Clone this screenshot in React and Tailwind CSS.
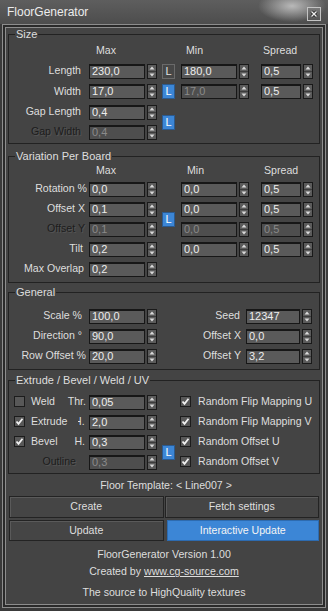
import React from "react";

function Arrows() {
  return (
    <svg width="10" height="15" viewBox="0 0 10 15" className="ml-[2px] shrink-0">
      <rect x="0.5" y="0.5" width="9" height="14" fill="#5b5b5b" stroke="#1a1a1a" />
      <line x1="1" y1="7.5" x2="9" y2="7.5" stroke="#3c3c3c" />
      <path d="M5 2.5 L7.5 5.5 H2.5Z" fill="#dadada" />
      <path d="M5 12.5 L7.5 9.5 H2.5Z" fill="#dadada" />
    </svg>
  );
}

function Spin({ v, w = "w-[56px]", dis, className = "" }) {
  return (
    <div className={`flex items-center h-[15px] ${className}`}>
      <div
        className={`${w} h-[15px] border border-[#171717] border-t-2 pl-[2px] text-[11px] leading-[11px] ${
          dis ? "bg-[#4e4e4e] text-[#8a8a8a]" : "bg-[#5a5a5a] text-[#ededed]"
        }`}
      >
        {v}
      </div>
      <Arrows />
    </div>
  );
}

function LBtn({ blue, className = "" }) {
  return (
    <div
      className={`w-[13px] h-[15px] justify-self-end self-center flex items-center justify-center text-[11px] border ${
        blue ? "bg-[#3c86d6] border-[#2a5a90] text-white" : "bg-[#474747] border-[#6a6a6a] text-[#e0e0e0]"
      } ${className}`}
    >
      L
    </div>
  );
}

function Check({ on }) {
  return (
    <svg width="11" height="11" viewBox="0 0 11 11" className="shrink-0">
      <rect x="0.5" y="0.5" width="10" height="10" fill="#585858" stroke="#1c1c1c" />
      {on && <path d="M2.5 5.5 L4.5 7.8 L8.5 2.8" fill="none" stroke="#f2f2f2" strokeWidth="1.8" />}
    </svg>
  );
}

const dimText = "text-[#1c1c1c] [text-shadow:1px_1px_0_#555555]";

function Lab({ children, pr = "pr-[8px]", dis }) {
  return <div className={`text-right ${pr} ${dis ? dimText : ""}`}>{children}</div>;
}

function Group({ title, children, className = "" }) {
  return (
    <fieldset className={`border border-[#222222] ${className}`}>
      <legend className="ml-[6px] px-[1px] text-[11px] leading-[13px]">{title}</legend>
      {children}
    </fieldset>
  );
}

function Btn({ children, blue }) {
  return (
    <div
      className={`flex items-center justify-center border ${
        blue
          ? "bg-[#3c86d6] border-[#2d6bb0] text-[#f4f4f4]"
          : "bg-[#454545] border-[#232323] shadow-[inset_1px_1px_0_#5a5a5a] text-[#dedede]"
      }`}
    >
      {children}
    </div>
  );
}

export default function App() {
  return (
    <div className="w-[328px] h-[611px] overflow-hidden bg-[#3a3a3a] flex flex-col font-['Liberation_Sans',Arial,sans-serif] text-[10.6px] text-[#dedede]">
      {/* title bar */}
      <div className="h-[24px] shrink-0 flex items-center justify-between pl-[7px] pr-[7px] bg-[radial-gradient(ellipse_34px_16px_at_292px_6px,#b9b9b9,transparent),linear-gradient(#5e5e5e,#4d4d4d)]">
        <span className="text-[12px] text-[#ececec]">FloorGenerator</span>
        <div className="w-[14px] h-[14px] mt-[3px] border border-[#c4c4c4] bg-[linear-gradient(#7a7a7a,#555)] flex items-center justify-center">
          <svg width="8" height="8" viewBox="0 0 8 8">
            <path d="M1.5 1.5 L6.5 6.5 M6.5 1.5 L1.5 6.5" stroke="#202020" strokeWidth="3" />
            <path d="M1.5 1.5 L6.5 6.5 M6.5 1.5 L1.5 6.5" stroke="#f0f0f0" strokeWidth="1.4" />
          </svg>
        </div>
      </div>

      {/* frame */}
      <div className="flex-1 mx-[2px] mb-[3px] border border-[#8d8d8d] p-[2px] bg-[#2a2a2a] flex flex-col">
        <div className="flex-1 border border-[#8d8d8d] bg-[#444444] px-[2px] flex flex-col">
          {/* Size */}
          <Group title="Size">
            <div className="grid grid-cols-[80px_68px_18px_86px_52px] grid-rows-[20px_20px_21px_20px_20px] items-center pb-[1px]">
              <div />
              <div className="pl-[7px]">Max</div>
              <div />
              <div className="pl-[11px]">Min</div>
              <div className="pl-[2px]">Spread</div>

              <Lab>Length</Lab>
              <Spin v="230,0" />
              <LBtn />
              <Spin v="180,0" className="ml-[6px]" />
              <Spin v="0,5" w="w-[41px]" />

              <Lab>Width</Lab>
              <Spin v="17,0" />
              <LBtn blue />
              <Spin v="17,0" dis className="ml-[6px]" />
              <Spin v="0,5" w="w-[41px]" />

              <Lab>Gap Length</Lab>
              <Spin v="0,4" />
              <LBtn blue className="row-span-2" />
              <div />
              <div />

              <Lab dis>Gap Width</Lab>
              <Spin v="0,4" dis />
            </div>
          </Group>

          {/* Variation */}
          <Group title="Variation Per Board" className="mt-[6px]">
            <div className="grid grid-cols-[80px_68px_18px_86px_52px] grid-rows-[16px_20px_20px_20px_20px_20px] items-center pb-[3px]">
              <div />
              <div className="pl-[7px]">Max</div>
              <div />
              <div className="pl-[12px]">Min</div>
              <div className="pl-[3px]">Spread</div>

              <Lab pr="pr-[2px]">Rotation %</Lab>
              <Spin v="0,0" />
              <div />
              <Spin v="0,0" className="ml-[6px]" />
              <Spin v="0,5" w="w-[41px]" />

              <Lab pr="pr-[4px]">Offset X</Lab>
              <Spin v="0,1" />
              <LBtn blue className="row-span-2" />
              <Spin v="0,0" className="ml-[6px]" />
              <Spin v="0,5" w="w-[41px]" />

              <Lab pr="pr-[4px]" dis>Offset Y</Lab>
              <Spin v="0,1" dis />
              <Spin v="0,0" dis className="ml-[6px]" />
              <Spin v="0,5" dis w="w-[41px]" />

              <Lab pr="pr-[6px]">Tilt</Lab>
              <Spin v="0,2" />
              <div />
              <Spin v="0,0" className="ml-[6px]" />
              <Spin v="0,5" w="w-[41px]" />

              <Lab pr="pr-[5px]">Max Overlap</Lab>
              <Spin v="0,2" />
            </div>
          </Group>

          {/* General */}
          <Group title="General" className="mt-[3px]">
            <div className="grid grid-cols-[80px_68px_89px_66px] grid-rows-[20px_20px_20px] items-center pt-[7px] pb-[3px]">
              <Lab pr="pr-[7px]">Scale %</Lab>
              <Spin v="100,0" />
              <Lab pr="pr-[6px]">Seed</Lab>
              <Spin v="12347" w="w-[55px]" />

              <Lab pr="pr-[7px]">Direction °</Lab>
              <Spin v="90,0" />
              <Lab pr="pr-[5px]">Offset X</Lab>
              <Spin v="0,0" w="w-[55px]" />

              <Lab pr="pr-[3px]">Row Offset %</Lab>
              <Spin v="20,0" />
              <Lab pr="pr-[5px]">Offset Y</Lab>
              <Spin v="3,2" w="w-[55px]" />
            </div>
          </Group>

          {/* Extrude */}
          <Group title="Extrude / Bevel / Weld / UV" className="mt-[4px]">
            <div className="grid grid-cols-[80px_68px_18px_1fr] grid-rows-[20px_20px_20px_20px] items-center pt-[5px] pb-[1px]">
              <div className="flex items-center pl-[5px] pr-[3px]">
                <Check />
                <span className="ml-[6px]">Weld</span>
                <span className="ml-auto">Thr.</span>
              </div>
              <Spin v="0,05" />
              <div />
              <div className="flex items-center pl-[5px]">
                <Check on />
                <span className="ml-[7px]">Random Flip Mapping U</span>
              </div>

              <div className="flex items-center pl-[5px]">
                <Check on />
                <span className="ml-[6px] relative z-[1] bg-[#444444] w-[47px] shrink-0">Extrude</span>
                <span className="-ml-[4px] shrink-0">H.</span>
              </div>
              <Spin v="2,0" />
              <div />
              <div className="flex items-center pl-[5px]">
                <Check on />
                <span className="ml-[7px]">Random Flip Mapping V</span>
              </div>

              <div className="flex items-center pl-[5px] pr-[4px]">
                <Check on />
                <span className="ml-[6px]">Bevel</span>
                <span className="ml-auto">H.</span>
              </div>
              <Spin v="0,3" />
              <LBtn blue className="row-span-2" />
              <div className="flex items-center pl-[5px]">
                <Check on />
                <span className="ml-[7px]">Random Offset U</span>
              </div>

              <Lab pr="pr-[13px]" dis>Outline</Lab>
              <Spin v="0,3" dis />
              <div className="flex items-center pl-[5px]">
                <Check on />
                <span className="ml-[7px]">Random Offset V</span>
              </div>
            </div>
          </Group>

          <div className="mt-[3px] h-[16px] leading-[16px] text-center pl-[4px]">Floor Template: &lt; Line007 &gt;</div>

          <div className="mt-[3px] mx-[1px] grid grid-cols-2 grid-rows-[22px_21px] gap-y-[2px] gap-x-[1px]">
            <Btn>Create</Btn>
            <Btn>Fetch settings</Btn>
            <Btn>Update</Btn>
            <div className="pl-[2px] grid">
              <Btn blue>Interactive Update</Btn>
            </div>
          </div>

          <div className="mt-[5px] h-[16px] leading-[16px] text-center">FloorGenerator Version 1.00</div>
          <div className="mt-[1px] h-[17px] leading-[17px] text-center">
            Created by <span className="underline">www.cg-source.com</span>
          </div>
          <div className="mt-[4px] h-[16px] leading-[16px] text-center">The source to HighQuality textures</div>
        </div>
      </div>
    </div>
  );
}
